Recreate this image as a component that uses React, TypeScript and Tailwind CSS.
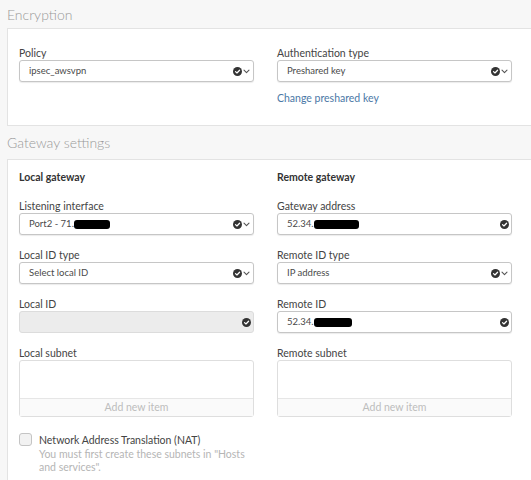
import React from "react";

const CheckCircle = () => (
  <svg width="9" height="9" viewBox="0 0 10 10" className="shrink-0">
    <circle cx="5" cy="5" r="5" fill="#333333" />
    <path d="M2.8 5.1 L4.4 6.6 L7.3 3.6" fill="none" stroke="#ffffff" strokeWidth="1.4" strokeLinecap="round" strokeLinejoin="round" />
  </svg>
);

const Chevron = () => (
  <svg width="7" height="5" viewBox="0 0 7 5" className="shrink-0">
    <path d="M1 1.2 L3.5 3.7 L6 1.2" fill="none" stroke="#555555" strokeWidth="1.1" strokeLinecap="round" strokeLinejoin="round" />
  </svg>
);

const Redact = ({ w }: { w: number }) => (
  <span className="inline-block h-[9px] rounded-[3px] bg-black align-middle" style={{ width: w }} />
);

const Label = ({ children }: { children: React.ReactNode }) => (
  <div className="h-[14px] leading-[14px] text-[10.5px] text-[#444]">{children}</div>
);

const Select = ({
  children,
  chevron = true,
  disabled = false,
}: {
  children?: React.ReactNode;
  chevron?: boolean;
  disabled?: boolean;
}) => (
  <div
    className={`flex h-[22px] items-center rounded-[3px] border pl-[9px] text-[9.5px] text-[#4a4a4a] ${
      chevron ? "pr-[3px]" : "pr-[2px]"
    } ${
      disabled
        ? "border-[#dcdcdc] bg-[#ececec]"
        : "border-[#c6c6c6] bg-white shadow-[0_1px_1px_rgba(0,0,0,0.08)]"
    }`}
  >
    <div className="flex flex-1 items-center overflow-hidden whitespace-nowrap">{children}</div>
    <div className="flex items-center gap-[1px]">
      <CheckCircle />
      {chevron && <Chevron />}
    </div>
  </div>
);

const Field = ({ label, children, first = false }: { label: string; children: React.ReactNode; first?: boolean }) => (
  <div className={first ? "" : "mt-[13px]"}>
    <Label>{label}</Label>
    {children}
  </div>
);

const Subnet = () => (
  <div className="flex h-[57px] flex-col rounded-[3px] border border-[#dedede] bg-white">
    <div className="flex-1" />
    <div className="flex h-[18px] items-center justify-center border-t border-[#e6e6e6] bg-[#fafafa] text-[10.5px] text-[#bdbdbd]">
      Add new item
    </div>
  </div>
);

export default function App() {
  return (
    <div
      className="h-[480px] w-[531px] overflow-hidden bg-[#f7f7f7] pl-[7px]"
      style={{ fontFamily: "Lato, 'Open Sans', Arial, sans-serif" }}
    >
      <div className="flex h-[28px] items-center text-[14px] font-light text-[#999]">Encryption</div>
      <div className="h-[98px] w-[560px] border border-[#e3e3e3] bg-white pl-[11px] pt-[17px]">
        <div className="grid grid-cols-[235px_235px] gap-x-[23px]">
          <div>
            <Label>Policy</Label>
            <Select>ipsec_awsvpn</Select>
          </div>
          <div>
            <Label>Authentication type</Label>
            <Select>Preshared key</Select>
            <div className="mt-[9px] h-[14px] leading-[14px] text-[10.5px] text-[#4b78a6]">Change preshared key</div>
          </div>
        </div>
      </div>
      <div className="flex h-[33px] items-center text-[14px] font-light text-[#999]">Gateway settings</div>
      <div className="h-[340px] w-[560px] border border-[#e3e3e3] bg-white pl-[11px] pt-[10px]">
        <div className="grid grid-cols-[235px_235px] gap-x-[23px]">
          <div>
            <div className="mb-[15px] h-[14px] leading-[14px] text-[10.5px] font-bold text-[#333]">Local gateway</div>
            <Field label="Listening interface" first>
              <Select>
                <span>Port2 - 71.</span>
                <Redact w={36} />
              </Select>
            </Field>
            <Field label="Local ID type">
              <Select>Select local ID</Select>
            </Field>
            <Field label="Local ID">
              <Select chevron={false} disabled />
            </Field>
            <Field label="Local subnet">
              <Subnet />
            </Field>
            <div className="mt-[16px] flex items-start gap-[7px]">
              <div className="h-[13px] w-[13px] shrink-0 rounded-[3px] border border-[#c4c4c4] bg-[#f2f2f2]" />
              <div>
                <div className="h-[14px] leading-[14px] text-[10.5px] text-[#444]">Network Address Translation (NAT)</div>
                <div className="mt-[1px] w-[212px] text-[10.5px] leading-[13px] text-[#b5b5b5]">
                  You must first create these subnets in "Hosts and services".
                </div>
              </div>
            </div>
          </div>
          <div>
            <div className="mb-[15px] h-[14px] leading-[14px] text-[10.5px] font-bold text-[#333]">Remote gateway</div>
            <Field label="Gateway address" first>
              <Select chevron={false}>
                <span>52.34.</span>
                <Redact w={45} />
              </Select>
            </Field>
            <Field label="Remote ID type">
              <Select>IP address</Select>
            </Field>
            <Field label="Remote ID">
              <Select chevron={false}>
                <span>52.34.</span>
                <Redact w={38} />
              </Select>
            </Field>
            <Field label="Remote subnet">
              <Subnet />
            </Field>
          </div>
        </div>
      </div>
    </div>
  );
}
